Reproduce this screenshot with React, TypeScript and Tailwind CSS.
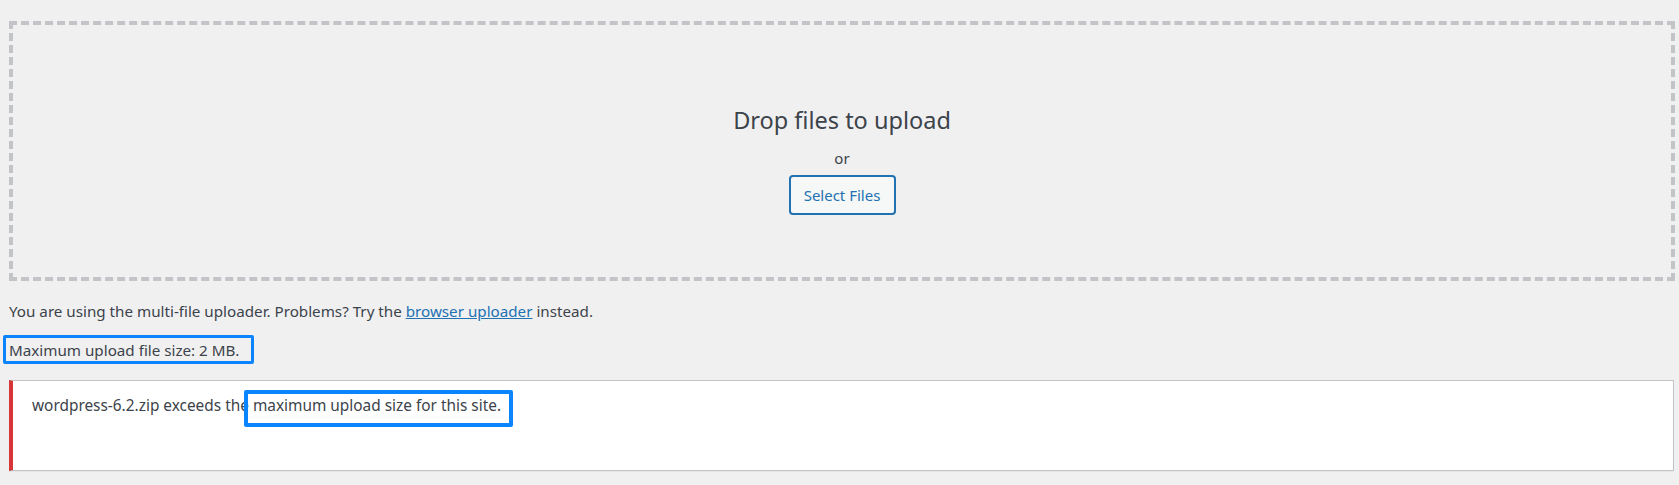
import React from 'react';

const font = { fontFamily: '"Noto Sans", "Open Sans", sans-serif' };

export default function App() {
  return (
    <div className="min-h-[485px] w-full bg-[#f0f0f1] pt-[21px] text-[#3c434a]" style={font}>
      {/* Drop zone */}
      <div className="ml-[9px] mr-[4px] h-[260px] border-4 border-dashed border-[#c3c4c7] pt-[81px] flex flex-col items-center">
        <p className="text-[23.5px] leading-[29px] text-[#3c434a]">Drop files to upload</p>
        <p className="mt-[13px] text-[15px] leading-[20px]">or</p>
        <button className="mt-[7px] h-[40px] w-[107px] rounded-[4px] border-2 border-[#2271b1] bg-[#f6f7f7] text-[15px] text-[#2271b1]">
          Select Files
        </button>
      </div>

      {/* Uploader info */}
      <div className="ml-[9px] mt-[20px] text-[15.2px] leading-[20px]">
        <p>
          You are using the multi-file uploader. Problems? Try the{' '}
          <a href="#" className="text-[#2271b1] underline">browser uploader</a> instead.
        </p>
        <p className="mt-[19px]">
          <span className="relative">
            Maximum upload file size: 2 MB.
            <span className="absolute -left-[6px] -right-[15px] -top-[5px] -bottom-[4px] rounded-[2px] border-[3px] border-[#0a84ff]"></span>
          </span>
        </p>
      </div>

      {/* Error notice */}
      <div className="ml-[9px] mr-[5px] mt-[20px] h-[91px] border border-l-4 border-[#c3c4c7] border-l-[#d63638] bg-white pl-[19px] pt-[15px] text-[15.4px] leading-[20px] shadow-[0_1px_1px_rgba(0,0,0,0.04)]">
        <p>
          wordpress-6.2.zip exceeds the{' '}
          <span className="relative">
            maximum upload size for this site.
            <span className="absolute -left-[9px] -right-[12px] -top-[5px] -bottom-[11px] rounded-[2px] border-4 border-[#0a84ff]"></span>
          </span>
        </p>
      </div>
    </div>
  );
}
